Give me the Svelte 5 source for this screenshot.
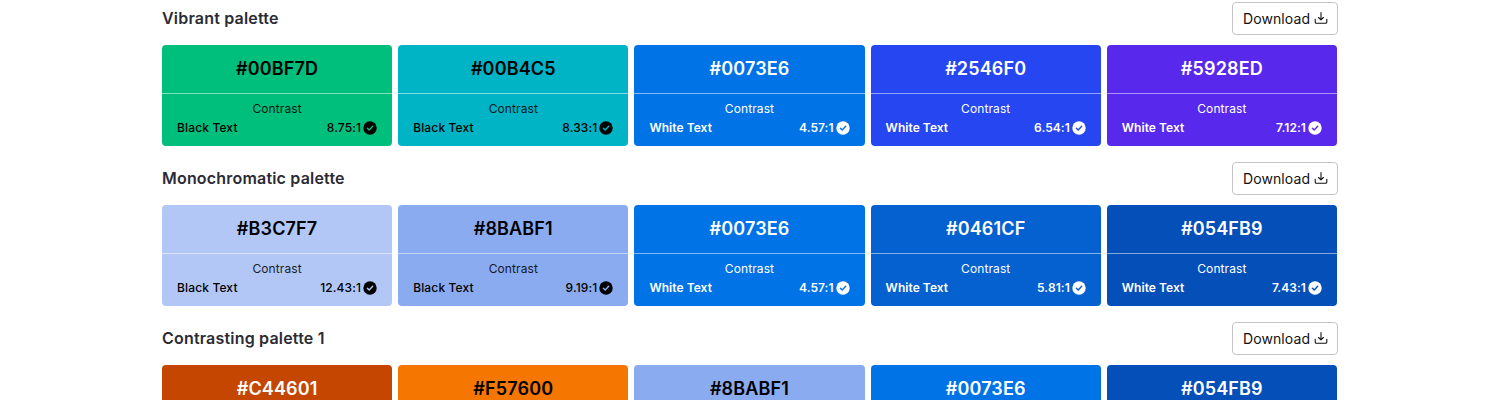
<script>
  const palettes = [
    { name: 'Vibrant palette', colors: [['#00BF7D', 'Black', '8.75'], ['#00B4C5', 'Black', '8.33'], ['#0073E6', 'White', '4.57'], ['#2546F0', 'White', '6.54'], ['#5928ED', 'White', '7.12']] },
    { name: 'Monochromatic palette', colors: [['#B3C7F7', 'Black', '12.43'], ['#8BABF1', 'Black', '9.19'], ['#0073E6', 'White', '4.57'], ['#0461CF', 'White', '5.81'], ['#054FB9', 'White', '7.43']] },
    { name: 'Contrasting palette 1', colors: [['#C44601'], ['#F57600', 'Black'], ['#8BABF1', 'Black'], ['#0073E6'], ['#054FB9']] }
  ];
</script>

<main>
  {#each palettes as palette}
    <section>
      <header>
        <h2>{palette.name}</h2>
        <button>
          Download
          <svg width="14" height="14" viewBox="0 0 14 14" fill="none" stroke="currentColor" stroke-width="1.1" stroke-linecap="round" stroke-linejoin="round"><path d="M7 1.5v7.3M4.6 6.5L7 8.9l2.4-2.4M1.2 8.2v2.8a1.3 1.3 0 0 0 1.3 1.3h9a1.3 1.3 0 0 0 1.3-1.3V8.2" /></svg>
        </button>
      </header>
      <div class="cards">
        {#each palette.colors as [hex, tone = 'White', ratio]}
          <article class:light={tone === 'White'} style="background: {hex}">
            <div class="hex">{hex}</div>
            {#if ratio}
              <div class="info">
                <div class="label">Contrast</div>
                <div class="row">
                  <span>{tone} Text</span>
                  <span class="ratio">{ratio}:1
                    <svg width="14" height="14" viewBox="0 0 14 14"><circle cx="7" cy="7" r="6.7" fill="currentColor" /><path d="M4.4 7.2l1.8 1.8 3.5-3.8" fill="none" stroke={hex} stroke-width="1.4" stroke-linecap="round" stroke-linejoin="round" /></svg>
                  </span>
                </div>
              </div>
            {/if}
          </article>
        {/each}
      </div>
    </section>
  {/each}
</main>

<style>
  :global(body) { background: #fff; }
  main { height: 400px; overflow: hidden; padding: 2px 162px 0; box-sizing: border-box; font-family: Inter, sans-serif; font-optical-sizing: none; }
  section { height: 160px; }
  header { display: flex; align-items: center; justify-content: space-between; height: 33px; }
  h2 { margin: 0; padding-bottom: 2px; font-size: 16px; font-weight: 600; line-height: 24px; letter-spacing: .19px; color: #2b2b35; }
  button { display: flex; align-items: center; gap: 4px; box-sizing: border-box; width: 106px; height: 33px; padding: 0 0 0 10px; border: 1px solid #c4c4c8; border-radius: 4px; background: #fff; color: #111; font: 400 14px Inter, sans-serif; font-optical-sizing: none; letter-spacing: .1px; }
  button svg { margin-bottom: 1px; }
  .cards { display: grid; grid-template-columns: repeat(5, 1fr); gap: 6px; width: 1175px; margin-top: 10px; }
  article { height: 101px; border-radius: 4px; color: #000; overflow: hidden; }
  .hex { box-sizing: border-box; height: 49px; border-bottom: 1px solid rgba(255, 255, 255, .5); text-align: center; font-size: 18px; font-weight: 600; line-height: 48px; letter-spacing: .15px; }
  .info { padding: 5px 15px 0; }
  .label { text-align: center; font-size: 12px; line-height: 19px; letter-spacing: .1px; opacity: .85; }
  .row { display: flex; justify-content: space-between; font-size: 12px; font-weight: 500; line-height: 19px; letter-spacing: .14px; }
  .light { color: #fff; }
  .light .row { font-weight: 600; letter-spacing: .05px; }
  .light .label { opacity: 1; }
  .ratio { display: flex; align-items: center; gap: 2px; }
</style>
